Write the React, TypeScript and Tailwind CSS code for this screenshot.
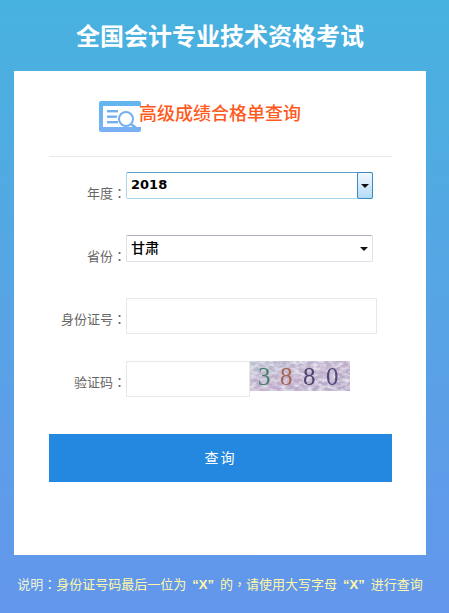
const font = { fontFamily: '"Liberation Sans", "Noto Sans CJK SC", sans-serif' };

function Arrow() {
  return (
    <svg width="8" height="4" viewBox="0 0 8 4" className="block">
      <path d="M0 0H8L4 4Z" fill="#111" />
    </svg>
  );
}

function Mark({ children }: { children: React.ReactNode }) {
  return <span className="font-['Noto_Sans_CJK_TC']">{children}</span>;
}

function Label({ children }: { children: React.ReactNode }) {
  return (
    <div className="w-[77px] pt-[13px] text-right text-[13px] leading-[16px] text-[#666] whitespace-nowrap">
      {children}
      <Mark>：</Mark>
    </div>
  );
}

function Logo() {
  return (
    <svg width="43" height="31" viewBox="0 0 43 31" className="block shrink-0">
      <defs>
        <linearGradient id="lg" x1="0" y1="0" x2="0" y2="1">
          <stop offset="0" stopColor="#62b6f0" />
          <stop offset="1" stopColor="#7cb0f4" />
        </linearGradient>
      </defs>
      <rect x="0" y="0" width="42" height="31" rx="2" fill="url(#lg)" />
      <rect x="4" y="5" width="38" height="21" fill="#fff" />
      <rect x="8" y="9" width="11" height="2.4" fill="#74b0ee" />
      <rect x="8" y="14.5" width="10" height="2.4" fill="#74b0ee" />
      <rect x="8" y="20" width="11" height="2.4" fill="#74b0ee" />
      <circle cx="27" cy="18" r="7" fill="#fff" stroke="#74b0ee" strokeWidth="2" />
      <path d="M32.5 23.5L40 29" stroke="#74b0ee" strokeWidth="2.4" />
    </svg>
  );
}

function Captcha() {
  return (
    <svg width="100" height="30" viewBox="0 0 100 30" className="block shrink-0">
      <defs>
        <filter id="noise" x="0" y="0" width="100%" height="100%">
          <feTurbulence type="fractalNoise" baseFrequency="0.16 0.28" numOctaves="3" seed="7" />
          <feColorMatrix
            type="matrix"
            values="0 0 0 0 0.93  0 0 0 0 0.95  0 0 0 0 0.96  1.6 0 0 0 -0.55"
          />
        </filter>
        <linearGradient id="cg" x1="0" y1="0" x2="1" y2="1">
          <stop offset="0" stopColor="#b4bccc" />
          <stop offset="0.5" stopColor="#bfaccb" />
          <stop offset="1" stopColor="#b3a8c6" />
        </linearGradient>
      </defs>
      <rect width="100" height="30" fill="url(#cg)" />
      <rect width="100" height="30" filter="url(#noise)" />
      <g fontSize="25" fontFamily="Liberation Serif, serif" opacity="0.85">
        <text x="8" y="24" fill="#2f7258">3</text>
        <text x="30" y="24" fill="#a0553c">8</text>
        <text x="53" y="24" fill="#38305f">8</text>
        <text x="76" y="24" fill="#3c3468">0</text>
      </g>
    </svg>
  );
}

export default function App() {
  return (
    <div
      style={font}
      className="w-[449px] h-[613px] overflow-hidden bg-gradient-to-b from-[#47b2de] to-[#6396ec] flex flex-col"
    >
      <h1 className="w-[440px] h-[71px] shrink-0 pt-[2px] flex items-center justify-center text-[24px] font-bold text-white">
        全国会计专业技术资格考试
      </h1>

      <div className="ml-[14px] w-[412px] h-[484px] shrink-0 bg-white pl-[35px] pr-[34px] flex flex-col">
        <div className="h-[86px] shrink-0 border-b border-[#e8e8e8] flex items-start">
          <div className="ml-[50px] mt-[30px] flex items-start">
            <Logo />
            <span className="-ml-[3px] mt-[1px] text-[18px] leading-[24px] font-medium text-[#ff5a1c] whitespace-nowrap">
              高级成绩合格单查询
            </span>
          </div>
        </div>

        <div className="mt-[15px] h-[27px] flex">
          <Label>年度</Label>
          <div className="w-[247px] h-[27px] rounded-[2px] border border-[#a9d6ee] border-t-[#5b9cc4] flex text-black">
            <span className="flex-1 pl-[4px] text-[13px] leading-[24px] font-bold font-['DejaVu_Sans']">2018</span>
            <div className="w-[16px] -my-px -mr-px border border-[#3d8abd] rounded-[2px] bg-gradient-to-b from-[#f2f9fe] to-[#b3dcf8] flex items-center justify-center">
              <Arrow />
            </div>
          </div>
        </div>

        <div className="mt-[36px] h-[27px] flex">
          <Label>省份</Label>
          <div className="w-[247px] h-[27px] rounded-[2px] border border-[#dde1ea] border-t-[#adadb8] flex items-center text-[14px] font-medium text-black">
            <span className="flex-1 pl-[4px]">甘肃</span>
            <div className="mr-[4px]">
              <Arrow />
            </div>
          </div>
        </div>

        <div className="mt-[36px] h-[36px] flex">
          <Label>身份证号</Label>
          <div className="w-[251px] h-[36px] border border-[#e8e8e8]" />
        </div>

        <div className="mt-[27px] h-[36px] flex">
          <Label>验证码</Label>
          <div className="w-[124px] h-[36px] border border-[#e8e8e8]" />
          <Captcha />
        </div>

        <button className="mt-[37px] h-[48px] w-full bg-[#2488e0] text-white text-[14px] tracking-[2px]">
          查询
        </button>
      </div>

      <p className="w-[440px] flex-1 pt-[1px] flex items-center justify-center text-[13px] text-[#fff8a8] whitespace-nowrap">
        <span className="text-[#eef4d8]">说明<Mark>：</Mark></span>
        <span>身份证号码最后一位为</span>
        <b className="mx-[6px]">“X”</b>
        <span>的<Mark>，</Mark>请使用大写字母</span>
        <b className="mx-[6px]">“X”</b>
        <span>进行查询</span>
      </p>
    </div>
  );
}
